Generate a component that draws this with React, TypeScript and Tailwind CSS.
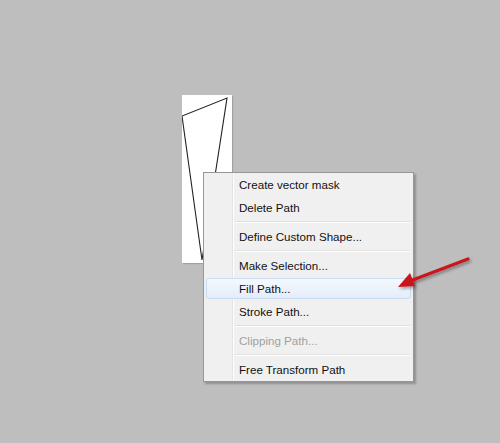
import React from 'react'

type Entry = { label?: string; sep?: boolean; disabled?: boolean; active?: boolean }

const entries: Entry[] = [
  { label: 'Create vector mask' },
  { label: 'Delete Path' },
  { sep: true },
  { label: 'Define Custom Shape...' },
  { sep: true },
  { label: 'Make Selection...' },
  { label: 'Fill Path...', active: true },
  { label: 'Stroke Path...' },
  { sep: true },
  { label: 'Clipping Path...', disabled: true },
  { sep: true },
  { label: 'Free Transform Path' },
]

const ContextMenu: React.FC = () => (
  <div className="absolute left-[203px] top-[172px] w-[211px] border border-[#979797] bg-[#f0f0f0] shadow-[2px_2px_2px_rgba(0,0,0,0.25)]">
    {/* gutter line */}
    <div className="absolute left-[28px] top-px bottom-px w-px bg-[#e2e3e3]" />
    <div className="absolute left-[29px] top-px bottom-px w-px bg-white" />
    {entries.map((e, i) =>
      e.sep ? (
        <div key={i} className="relative h-[6px] pl-[31px] pr-[3px] flex flex-col justify-center">
          <div className="h-px bg-[#e0e0e0]" />
          <div className="h-px bg-white" />
        </div>
      ) : (
        <div key={i} className="relative h-[23px] px-[2px] py-px">
          <div
            className={`h-full flex items-center pl-[32px] rounded-[3px] ${
              e.active
                ? 'border border-[#c9dcf3] bg-gradient-to-b from-[#f5f8fd] to-[#e3edfa]'
                : 'border border-transparent'
            } ${e.disabled ? 'text-[#a0a0a0]' : 'text-[#111]'}`}
          >
            {e.label}
          </div>
        </div>
      )
    )}
  </div>
)

const App: React.FC = () => {
  return (
    <div
      className="relative w-[500px] h-[443px] bg-[#bebebe] overflow-hidden text-[11.6px]"
      style={{ fontFamily: '"Liberation Sans", Arial, sans-serif' }}
    >
      {/* document canvas with the path */}
      <div className="absolute left-[182px] top-[95px] w-[50px] h-[168px] bg-white shadow-[1px_1px_1px_rgba(0,0,0,0.15)]">
        <svg width="50" height="168" viewBox="0 0 50 168" className="block">
          <polygon points="0,21 45,3 20,165" fill="none" stroke="#222" strokeWidth="1.1" />
        </svg>
      </div>

      <ContextMenu />

      {/* red arrow */}
      <svg className="absolute left-0 top-0" width="500" height="443" viewBox="0 0 500 443">
        <defs>
          <filter id="sh" x="-20%" y="-50%" width="140%" height="200%">
            <feDropShadow dx="1.5" dy="2" stdDeviation="1.5" floodColor="#000" floodOpacity="0.35" />
          </filter>
        </defs>
        <g filter="url(#sh)">
          <line x1="468" y1="259" x2="410" y2="281" stroke="#c8161d" strokeWidth="3.2" strokeLinecap="round" />
          <polygon points="398,287 410,273 415,286" fill="#c8161d" />
        </g>
      </svg>
    </div>
  )
}

export default App
